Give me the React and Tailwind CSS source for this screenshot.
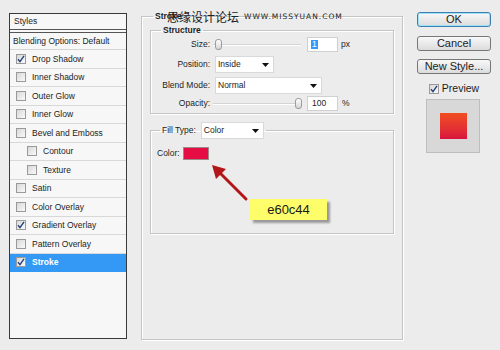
const font = { fontFamily: '"Liberation Sans", Arial, sans-serif' };

const styleRows = [
  { label: "Drop Shadow", checked: true },
  { label: "Inner Shadow" },
  { label: "Outer Glow" },
  { label: "Inner Glow" },
  { label: "Bevel and Emboss" },
  { label: "Contour", indent: true },
  { label: "Texture", indent: true },
  { label: "Satin" },
  { label: "Color Overlay" },
  { label: "Gradient Overlay", checked: true },
  { label: "Pattern Overlay" },
  { label: "Stroke", checked: true, selected: true },
];

function Check({ checked }) {
  return (
    <span className="w-[10px] h-[10px] shrink-0 border border-[#9a9a9a] bg-gradient-to-br from-[#d8d8d8] to-[#fafafa] flex items-center justify-center">
      {checked && (
        <svg width="8" height="8" viewBox="0 0 8 8">
          <path d="M1 4.2 L3 6.6 L7 0.8" fill="none" stroke="#22407a" strokeWidth="1.4" />
        </svg>
      )}
    </span>
  );
}

function Select({ value, width }) {
  return (
    <div
      className="h-[17px] bg-white border border-[#d9d9d9] flex items-center justify-between pl-[2px] pr-[4px]"
      style={{ width }}
    >
      <span>{value}</span>
      <svg width="7" height="4" viewBox="0 0 7 4">
        <path d="M0 0 H7 L3.5 4 Z" fill="#111" />
      </svg>
    </div>
  );
}

function Slider({ pos }) {
  return (
    <div className="relative w-[88px] h-[15px] flex items-center">
      <div className="w-full h-[2px] bg-[#d4d4d4] border-b border-white" />
      <div
        className="absolute top-[2px] w-[7px] h-[11px] rounded-[3px] border border-[#9c9c9c] bg-gradient-to-b from-white to-[#d6d6d6]"
        style={{ left: pos }}
      />
    </div>
  );
}

function Button({ children, focused }) {
  return (
    <div
      className={
        "h-[15px] rounded-[3px] border flex items-center justify-center text-[11px] leading-none bg-gradient-to-b from-[#f8f8f8] to-[#dcdcdc] " +
        (focused
          ? "border-[#3c7fb1] shadow-[inset_0_0_0_1px_#9fe0f7]"
          : "border-[#777777]")
      }
    >
      {children}
    </div>
  );
}

export default function App() {
  return (
    <div
      className="relative w-[500px] h-[350px] bg-[#ececec] overflow-hidden flex items-start text-[8.5px] leading-none text-[#1c1c1c]"
      style={font}
    >
      {/* styles list */}
      <div className="ml-[9px] mt-[13px] w-[118px] h-[326px] border border-[#3a3a3a] bg-[#f7f7f7] flex flex-col">
        <div className="h-[16px] shrink-0 flex items-center pl-[4px] border-b border-[#555]">Styles</div>
        <div className="h-[18px] shrink-0 flex items-center pl-[3px] mt-[2px] border-t border-[#555] border-b border-b-[#d4d4d4]">
          Blending Options: Default
        </div>
        {styleRows.map((r) => (
          <div
            key={r.label}
            className={
              "h-[18.5px] shrink-0 flex items-center gap-[6px] border-b " +
              (r.indent ? "pl-[17px] " : "pl-[6px] ") +
              (r.selected
                ? "bg-[#3399f5] text-white font-bold border-[#3399f5]"
                : "border-[#d8d8d8]")
            }
          >
            <Check checked={r.checked} />
            <span>{r.label}</span>
          </div>
        ))}
      </div>

      {/* stroke panel */}
      <fieldset className="ml-[14px] mt-[10px] w-[262px] h-[330px] border border-[#c4c4c4] shadow-[inset_1px_1px_0_#fff,1px_1px_0_#fff]">
        <legend className="ml-[11px] px-[2px] h-[12px] leading-[12px] font-bold">Stroke</legend>

        <fieldset className="ml-[8px] mt-[2px] w-[244px] h-[90px] border border-[#c4c4c4] shadow-[inset_1px_1px_0_#fff,1px_1px_0_#fff]">
          <legend className="ml-[10px] px-[2px] h-[12px] leading-[12px] font-bold">Structure</legend>

          <div className="flex items-center h-[15px] mt-[1px]">
            <span className="w-[59px] text-right">Size:</span>
            <div className="ml-[3px]">
              <Slider pos={2} />
            </div>
            <div className="ml-[6px] w-[31px] h-[15px] bg-white border border-[#d0d0d0] flex items-center pl-[3px]">
              <span className="bg-[#3399ff] text-white px-[1px]">1</span>
            </div>
            <span className="ml-[3px]">px</span>
          </div>

          <div className="flex items-center h-[17px] mt-[4px]">
            <span className="w-[59px] text-right">Position:</span>
            <div className="ml-[5px]">
              <Select value="Inside" width={59} />
            </div>
          </div>

          <div className="flex items-center h-[17px] mt-[4px]">
            <span className="w-[59px] text-right">Blend Mode:</span>
            <div className="ml-[5px]">
              <Select value="Normal" width={107} />
            </div>
          </div>

          <div className="flex items-center h-[15px] mt-[2px]">
            <span className="w-[59px] text-right">Opacity:</span>
            <div className="ml-[3px]">
              <Slider pos={82} />
            </div>
            <div className="ml-[6px] w-[31px] h-[15px] bg-white border border-[#d0d0d0] flex items-center pl-[4px]">
              100
            </div>
            <span className="ml-[4px]">%</span>
          </div>
        </fieldset>

        <fieldset className="ml-[8px] mt-[8px] w-[244px] h-[112px] border border-[#c4c4c4] shadow-[inset_1px_1px_0_#fff,1px_1px_0_#fff]">
          <legend className="ml-[9px] px-[2px] h-[17px] flex items-center gap-[5px]">
            <span>Fill Type:</span>
            <Select value="Color" width={63} />
          </legend>
          <div className="flex items-center mt-[8px] pl-[6px] gap-[3px]">
            <span>Color:</span>
            <div className="w-[26px] h-[13px] bg-[#e60c44] border border-[#9a8a8a]" />
          </div>
        </fieldset>
      </fieldset>

      {/* right buttons */}
      <div className="ml-[14px] mt-[12px] w-[74px] flex flex-col">
        <Button focused>OK</Button>
        <div className="mt-[9px]">
          <Button>Cancel</Button>
        </div>
        <div className="mt-[8px]">
          <Button>New Style...</Button>
        </div>
        <div className="mt-[9px] h-[11px] flex items-center justify-center gap-[3px] text-[10.5px]">
          <Check checked />
          <span>Preview</span>
        </div>
        <div className="mt-[5px] self-center ml-[-2px] w-[54px] h-[54px] bg-[#d8d8d8] border border-[#bdbdbd] flex items-center justify-center">
          <div className="w-[27px] h-[26px] bg-gradient-to-b from-[#f24d1e] to-[#d8123c]" />
        </div>
      </div>

      {/* watermark */}
      <div className="absolute left-[167px] top-[10px] flex items-center gap-[5px] text-[#222] pointer-events-none">
        <span
          className="text-[12px] leading-[13px]"
          style={{ fontFamily: '"Noto Sans CJK SC", sans-serif', fontWeight: 400 }}
        >
          思缘设计论坛
        </span>
        <span className="text-[7.5px] tracking-[1px]" style={{ fontFamily: '"DejaVu Sans", sans-serif' }}>
          WWW.MISSYUAN.COM
        </span>
      </div>

      {/* annotation arrow */}
      <svg className="absolute left-[205px] top-[158px]" width="48" height="46" viewBox="0 0 48 46">
        <path d="M41 41 L14 14" stroke="#b3161a" strokeWidth="3" strokeLinecap="round" />
        <path d="M7 7 L21 11 L11 21 Z" fill="#b3161a" />
      </svg>

      {/* annotation note */}
      <div className="absolute left-[250px] top-[199px] w-[77px] h-[21px] bg-[#fefe6a] shadow-[3px_3px_2px_rgba(0,0,0,0.35)] flex items-center justify-center text-[13px] text-[#1a1a1a]">
        e60c44
      </div>
    </div>
  );
}
